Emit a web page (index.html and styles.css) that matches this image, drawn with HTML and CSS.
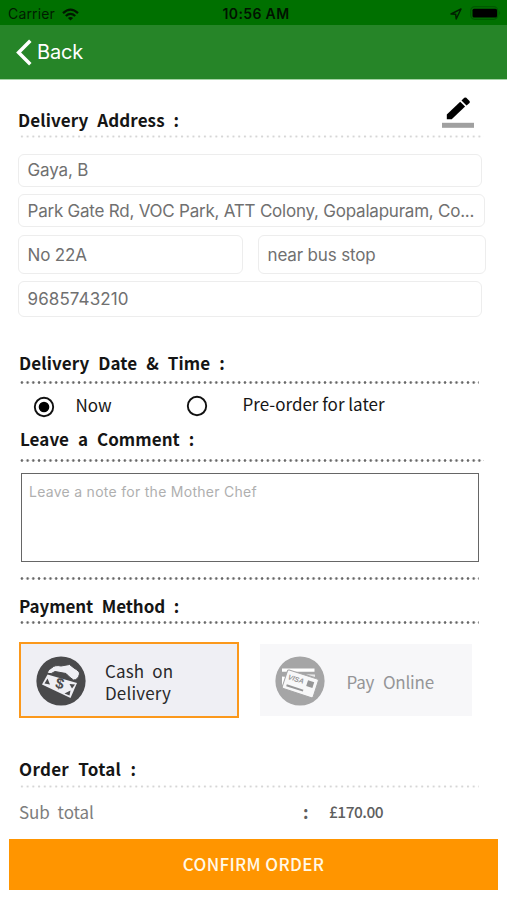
FILE: index.html
```html
<!DOCTYPE html>
<html lang="en">
<head>
<meta charset="utf-8">
<title>Checkout</title>
<link rel="stylesheet" href="styles.css">
</head>
<body>
<header>
  <div class="status">
    <div class="carrier"><span>Carrier</span>
      <svg width="17" height="13" viewBox="0 0 17 13" fill="none" stroke="#001800" stroke-width="2.3"><path d="M1 5.1Q8.500 -1.900 16 5.100"/><path d="M3.800 8Q8.500 3.800 13.200 8"/><path d="M8.500 12.500L5.900 9.900Q8.500 7.900 11.100 9.900Z" fill="#001800" stroke="none"/></svg>
    </div>
    <span class="clock">10:56 AM</span>
    <div class="indicators">
      <svg width="12" height="12" viewBox="0 0 12 12" fill="none" stroke="#002000" stroke-width="1.500" stroke-linejoin="round"><path d="M1 6L11 1L6.200 11L5.700 6.300Z"/></svg>
      <svg width="32" height="15" viewBox="0 0 32 15"><rect x=".7" y=".7" width="27" height="12.600" rx="4" fill="none" stroke="#005800" stroke-width="1.200"/><rect x="2.500" y="2.800" width="24.500" height="8.800" rx="1.500" fill="#000"/><path d="M29.300 5Q31.200 7 29.300 9Z" fill="#005800"/></svg>
    </div>
  </div>
  <nav class="nav">
    <svg width="16" height="27" viewBox="0 0 16 27" fill="none" stroke="#fff" stroke-width="3.500"><path d="M14.300 1.800L2.600 13.500L14.300 25.200"/></svg>
    <span class="back">Back</span>
  </nav>
</header>
<main>
  <div class="address-head">
    <h2 class="h-address">Delivery Address :</h2>
    <svg class="edit" width="32" height="32" viewBox="0 0 32 32"><path d="M4.800 17.600L18.200 4.700L23.100 9.400L9.700 22.300H4.800Z" fill="#000"/><path d="M19.500 3.500L22.300.8Q23.300 0 24.300.8L27.500 4Q28.300 5 27.500 5.900L24.500 8.500Z" fill="#000"/><rect y="25.800" width="32" height="5" fill="#a0a0a0"/></svg>
  </div>
  <div class="dots faint long"></div>
  <div class="fields">
    <div class="field"><span class="f-name">Gaya, B</span></div>
    <div class="field wide"><span class="f-road">Park Gate Rd, VOC Park, ATT Colony, Gopalapuram, Co...</span></div>
    <div class="pair">
      <div class="field"><span>No 22A</span></div>
      <div class="field"><span>near bus stop</span></div>
    </div>
    <div class="field phone"><span class="f-phone">9685743210</span></div>
  </div>
  <h2 class="h-date">Delivery Date &amp; Time :</h2>
  <div class="dots"></div>
  <div class="choices">
    <svg class="radio on" width="22" height="22" viewBox="0 0 22 22"><circle cx="11" cy="11" r="9.200" fill="none" stroke="#111" stroke-width="1.900"/><circle cx="11" cy="11" r="5.300" fill="#000"/></svg>
    <span class="now">Now</span>
    <svg class="radio" width="22" height="22" viewBox="0 0 22 22"><circle cx="11" cy="11" r="9.200" fill="none" stroke="#111" stroke-width="1.900"/></svg>
    <span class="later">Pre-order for later</span>
  </div>
  <h2 class="h-comment">Leave a Comment :</h2>
  <div class="dots long"></div>
  <div class="note"><span>Leave a note for the Mother Chef</span></div>
  <div class="dots"></div>
  <h2 class="h-payment">Payment Method :</h2>
  <div class="dots"></div>
  <div class="methods">
    <div class="method cash">
      <svg width="50" height="50" viewBox="0 0 50 50"><circle cx="25" cy="25" r="24.600" fill="#4a4a4c"/><path d="M11.500 18.500L41 27L34.500 42L6 28.500Z" fill="#efeff4"/><path d="M12 17.500Q10.500 15 15.500 12Q19 8.500 25 10L33.500 8.500L38 12Q44 15.500 43.500 18Q42 24 37.500 24L33.500 21L30 17.500L19 15.500Q15 18.500 12 17.500Z" fill="#efeff4" stroke="#4a4a4c" stroke-width="1"/><path d="M8.500 27.500L11.500 22.500L14 28.500ZM33.500 28L39 28.500L36 32.500ZM28.500 37.500L34.500 34.500L33.500 39.500Z" fill="#4a4a4c"/><text x="24" y="32.500" class="currency" transform="rotate(15 24 27)">$</text></svg>
      <span>Cash on Delivery</span>
    </div>
    <div class="method online">
      <svg width="50" height="50" viewBox="0 0 50 50"><circle cx="25" cy="25" r="24.600" fill="#a5a5a6"/><path d="M7 12.500H39.500V15.800H7ZM7 20.500L12 21L9 30L7 28.500Z" fill="#fff"/><path d="M31 18.200L40 18.500V21Z" fill="#e7e7e8"/><g transform="rotate(18 25 28)"><rect x="9" y="18" width="32.500" height="19.500" rx="1.500" fill="#f8f8f9" stroke="#a5a5a6"/><text x="11.500" y="27" class="visa">VISA</text><rect x="31.500" y="22" width="6.500" height="6" fill="#969697"/><path d="M12.500 33.300H30" stroke="#969697" stroke-width="2"/></g></svg>
      <span>Pay Online</span>
    </div>
  </div>
  <h2 class="h-total">Order Total :</h2>
  <div class="dots faint"></div>
  <div class="subtotal"><span class="label">Sub total</span><span class="colon">:</span><span class="amount">£170.00</span></div>
</main>
<div class="confirm"><span>CONFIRM ORDER</span></div>
</body>
</html>
```
FILE: styles.css
```css
* { box-sizing: border-box; }
body { margin: 0; width: 507px; height: 900px; overflow: hidden; background: #fff; font-family: "Noto Sans CJK SC", "Noto Sans", sans-serif; color: #161616; }
span, h2 { white-space: nowrap; }
svg { display: block; flex: none; }
.status { display: grid; grid-template-columns: 1fr auto 1fr; align-items: center; height: 25px; padding: 3px 3px 0 8px; background: #007000; font: 14px/22px Inter, sans-serif; color: #001c00; }
.carrier { display: flex; align-items: center; gap: 7px; }
.carrier span { width: 47px; letter-spacing: .15px; }
.clock { font-weight: 600; font-size: 14px; letter-spacing: .35px; color: #001300; }
.indicators { display: flex; justify-content: flex-end; align-items: center; gap: 8px; margin: -1px 2px 0 0; }
.nav { display: flex; align-items: center; height: 55px; padding-left: 16px; background: #268528; border-bottom: 1px solid #a5d3a5; }
.back { margin-left: 5px; font: 20px/54px Inter, sans-serif; color: #fff; letter-spacing: -.2px; }
main { padding-left: 18px; }
h2 { margin: 0 0 0 1px; font-size: 17px; line-height: 24px; font-weight: 700; letter-spacing: .1px; word-spacing: 5px; color: #151515; }
.address-head { display: flex; align-items: flex-start; height: 55px; padding-top: 17px; }
.address-head h2 { width: 424px; margin: 11px 0 0; }
.dots { width: 460px; height: 3px; margin-left: 1px; background: radial-gradient(circle at 2.900px 1.500px, #656565 .9px, transparent 1.700px) 0 0 / 5.720px 3px repeat-x; }
.dots.long { width: 465px; }
.dots.faint { background-image: radial-gradient(circle at 2.900px 1.500px, #d6d6d6 .6px, transparent 1.500px); }
.fields { display: flex; flex-direction: column; margin-top: 16px; font: 17px/31px Inter, sans-serif; letter-spacing: -.15px; color: #707070; }
.field { width: 464px; height: 33px; padding-left: 8.500px; border: 1px solid #ededed; border-radius: 6px; }
.field.wide { width: 467px; margin-top: 7px; line-height: 32px; }
.f-road { letter-spacing: -.225px; }
.f-phone { letter-spacing: .1px; }
.pair { display: grid; grid-template-columns: 225px 228px; gap: 15px; margin-top: 8px; line-height: 38px; }
.pair .field { width: 100%; height: 39px; }
.field.phone { height: 36px; margin-top: 7px; line-height: 34px; }
.h-date { margin-top: 34px; }
.h-date + .dots { margin-top: 6px; }
.choices { display: grid; grid-template-columns: 43px 110px 57px auto; justify-content: start; height: 43px; padding: 9px 0 0 14.500px; font-size: 17px; line-height: 24px; }
.radio.on { margin-top: 3px; }
.radio { margin-top: 2px; }
.later { margin-top: -1px; }
.h-comment { margin-left: 2px; letter-spacing: .05px; }
.h-comment + .dots { margin-top: 8px; }
.note { width: 458px; height: 89px; margin: 11px 0 15px 3px; padding: 8px 7px; border: 1px solid #666; font: 14px/20px Inter, sans-serif; letter-spacing: .28px; color: #afafaf; }
.h-payment { margin-top: 14px; letter-spacing: -.1px; }
.h-payment + .dots { margin-top: 3px; }
.methods { display: flex; align-items: center; gap: 21px; margin-top: 18px; padding-left: 1px; height: 76px; }
.method { display: flex; align-items: center; }
.cash { width: 220px; height: 76px; padding: 2px 0 0 15px; border: 2px solid #fb981b; background: #efeff4; }
.cash span { width: 90px; margin: 2px 0 0 19px; white-space: normal; font-size: 17px; line-height: 22px; word-spacing: 4px; letter-spacing: .15px; color: #29292b; }
.online { width: 212px; height: 72px; padding: 2px 0 0 15px; background: #f7f7f9; }
.online span { margin-left: 21.500px; font-size: 17px; word-spacing: 5px; letter-spacing: -.2px; color: #959597; }
.currency { font: 700 15px "Liberation Sans", sans-serif; fill: #4a4a4c; text-anchor: middle; }
.visa { font: italic 700 7px "Liberation Sans", sans-serif; fill: #969697; }
.h-total { margin-top: 39px; letter-spacing: .3px; }
.h-total + .dots { margin-top: 4px; }
.subtotal { display: grid; grid-template-columns: 284px 26px auto; justify-content: start; height: 51px; padding: 12px 0 0 1px; font-size: 17px; line-height: 24px; color: #5e5e5e; }
.label { color: #7d7d7d; word-spacing: 4px; letter-spacing: -.05px; }
.colon { font-weight: 700; }
.amount { margin-top: -1px; font-size: 15.500px; font-weight: 500; letter-spacing: -.5px; }
.confirm { width: 489px; height: 51px; margin-left: 9px; background: #ff9500; color: #fff9e8; font-size: 17px; font-weight: 500; line-height: 49px; letter-spacing: .35px; text-align: center; }
```
